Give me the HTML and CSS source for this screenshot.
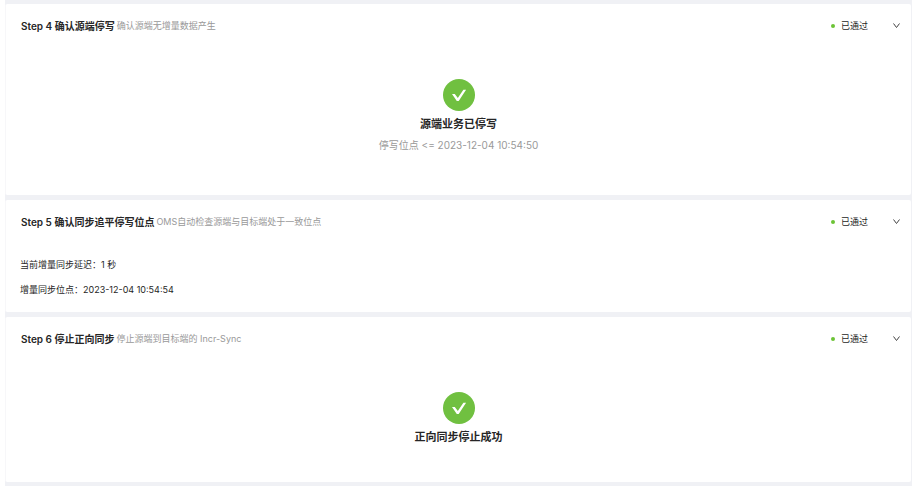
FILE: index.html
```html
<!DOCTYPE html>
<html lang="zh-CN">
<head>
<meta charset="utf-8">
<title>正向切换</title>
<link rel="stylesheet" href="styles.css">
</head>
<body>
<main class="steps">
  <section class="card">
    <header class="card-header">
      <h2 class="title">Step 4 确认源端停写</h2>
      <span class="desc">确认源端无增量数据产生</span>
      <span class="status">已通过</span>
      <button class="toggle" type="button" aria-label="展开或收起"><svg class="chevron" viewBox="0 0 9 9"><path d="M1.5 2.5l3 4 3-4"/></svg></button>
    </header>
    <div class="result">
      <svg class="check" viewBox="0 0 32 32"><circle cx="16" cy="16" r="16"/><path d="M9 15h2.8l3 3.9 5.6-8.1h2.7L15.7 22h-1.9z"/></svg>
      <p class="result-title">源端业务已停写</p>
      <p class="result-note">停写位点 &lt;= 2023-12-04 10:54:50</p>
    </div>
  </section>
  <section class="card">
    <header class="card-header">
      <h2 class="title">Step 5 确认同步追平停写位点</h2>
      <span class="desc">OMS自动检查源端与目标端处于一致位点</span>
      <span class="status">已通过</span>
      <button class="toggle" type="button" aria-label="展开或收起"><svg class="chevron" viewBox="0 0 9 9"><path d="M1.5 2.5l3 4 3-4"/></svg></button>
    </header>
    <div class="info">
      <p class="info-row">当前增量同步延迟：1 秒</p>
      <p class="info-row">增量同步位点：2023-12-04 10:54:54</p>
    </div>
  </section>
  <section class="card">
    <header class="card-header">
      <h2 class="title">Step 6 停止正向同步</h2>
      <span class="desc">停止源端到目标端的 Incr-Sync</span>
      <span class="status">已通过</span>
      <button class="toggle" type="button" aria-label="展开或收起"><svg class="chevron" viewBox="0 0 9 9"><path d="M1.5 2.5l3 4 3-4"/></svg></button>
    </header>
    <div class="result">
      <svg class="check" viewBox="0 0 32 32"><circle cx="16" cy="16" r="16"/><path d="M9 15h2.8l3 3.9 5.6-8.1h2.7L15.7 22h-1.9z"/></svg>
      <p class="result-title">正向同步停止成功</p>
    </div>
  </section>
</main>
</body>
</html>
```
FILE: styles.css
```css
* {
  box-sizing: border-box;
}

body {
  margin: 0;
  background: #fff;
  color: #262626;
  font: 9px/20px Inter, "Noto Sans CJK SC", sans-serif;
}

h2,
p {
  margin: 0;
}

.steps {
  display: flex;
  flex-direction: column;
  gap: 5px;
  margin: 0 5px;
  padding: 4px 1px 4px 0;
  background: #f0f1f5;
}

.card {
  background: #fff;
  border-left: 1px solid #f7f7f9;
  border-radius: 2px;
}

.card-header {
  display: flex;
  align-items: center;
  gap: 2px;
  height: 43px;
  padding: 0 10px 0 15px;
}

.title {
  font-size: 10px;
  font-weight: 600;
}

.desc {
  color: #999;
}

.status {
  display: flex;
  align-items: center;
  gap: 6px;
  margin-left: auto;
}

.status::before {
  content: "";
  width: 4px;
  height: 4px;
  border-radius: 50%;
  background: #6cc336;
}

.toggle {
  display: flex;
  margin-left: 22px;
  padding: 0;
  border: 0;
  background: none;
}

.chevron {
  width: 9px;
  height: 9px;
  fill: none;
  stroke: #444;
  stroke-width: 1;
}

.result {
  display: flex;
  flex-direction: column;
  align-items: center;
  padding: 32px 0 35px;
}

.check {
  width: 32px;
  height: 32px;
  margin-bottom: 3px;
}

.check circle {
  fill: #70c040;
}

.check path {
  fill: #fff;
}

.result-title {
  font-size: 11px;
  font-weight: 600;
}

.result-note {
  margin-bottom: 4px;
  color: #999;
  font-size: 10px;
  line-height: 22px;
}

.info {
  padding: 9px 14px 10px;
}

.info-row {
  line-height: 25px;
}
```
